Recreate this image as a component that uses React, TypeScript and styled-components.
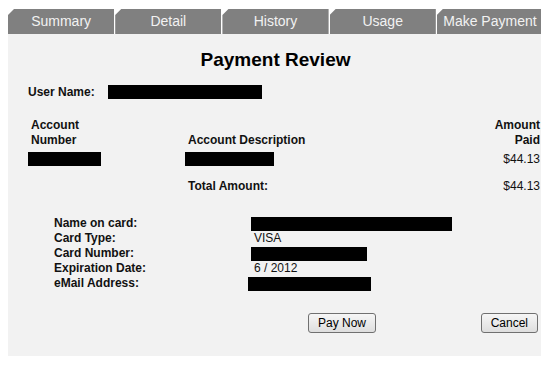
import styled, { createGlobalStyle } from "styled-components";

const GlobalStyle = createGlobalStyle`
  body {
    margin: 8px;
    background: #ffffff;
    font-family: "Liberation Sans", Arial, sans-serif;
    color: #000;
  }
`;

const tabs = ["Summary", "Detail", "History", "Usage", "Make Payment"];

const cardRows = [
  { label: "Name on card:", bar: 201 },
  { label: "Card Type:", text: "VISA" },
  { label: "Card Number:", bar: 116 },
  { label: "Expiration Date:", text: "6 / 2012" },
  { label: "eMail Address:", bar: 123, shift: -3 },
];

export default function App() {
  return (
    <>
      <GlobalStyle />
      <Page>
        <TabBar>
          {tabs.map((t) => (
            <Tab key={t}>{t}</Tab>
          ))}
        </TabBar>

        <Panel>
          <Title>Payment Review</Title>

          <UserRow>
            <Label>User Name:</Label>
            <Redacted $w={154} />
          </UserRow>

          <AccountTable>
            <HeadCell>
              Account
              <br />
              Number
            </HeadCell>
            <HeadCell>Account Description</HeadCell>
            <HeadCell $right>
              Amount
              <br />
              Paid
            </HeadCell>

            <DataCell>
              <Redacted $w={73} />
            </DataCell>
            <DataCell>
              <Redacted $w={89} />
            </DataCell>
            <DataCell $right>$44.13</DataCell>

            <TotalCell />
            <TotalCell>
              <Label>Total Amount:</Label>
            </TotalCell>
            <TotalCell $right>$44.13</TotalCell>
          </AccountTable>

          <CardTable>
            {cardRows.map((r) => (
              <CardRow key={r.label}>
                <Label>{r.label}</Label>
                {r.bar ? (
                  <Redacted $w={r.bar} $shift={r.shift} />
                ) : (
                  <Value>{r.text}</Value>
                )}
              </CardRow>
            ))}
          </CardTable>

          <ButtonRow>
            <Button>Pay Now</Button>
            <Button $push>Cancel</Button>
          </ButtonRow>
        </Panel>
      </Page>
    </>
  );
}

const Page = styled.div`
  width: 535px;
`;

const TabBar = styled.div`
  display: flex;
  gap: 1px;
  margin-top: 1px;
  height: 25px;
`;

const Tab = styled.div`
  flex: 1;
  background: #808080;
  color: #f2f2f2;
  font-size: 14px;
  line-height: 25px;
  text-align: center;
  clip-path: polygon(6px 0, 100% 0, 100% 100%, 0 100%, 0 6px);
`;

const Panel = styled.div`
  background: #f2f2f2;
  padding: 15px 3px 23px 20px;
`;

const Title = styled.h1`
  margin: 0;
  font-size: 19px;
  line-height: 22px;
  font-weight: bold;
  text-align: center;
  padding-right: 17px;
`;

const Label = styled.span`
  font-size: 12px;
  font-weight: bold;
  color: #111;
`;

const Value = styled.span`
  font-size: 12px;
  color: #111;
  padding-left: 3px;
`;

const Redacted = styled.span<{ $w: number; $shift?: number }>`
  display: inline-block;
  width: ${(p) => p.$w}px;
  height: 14px;
  background: #000;
  vertical-align: middle;
  margin-left: ${(p) => p.$shift ?? 0}px;
`;

const UserRow = styled.div`
  display: flex;
  align-items: center;
  height: 15px;
  margin-top: 13px;

  ${Label} {
    width: 80px;
  }
`;

const AccountTable = styled.div`
  display: grid;
  grid-template-columns: 157px 1fr auto;
  margin-top: 19px;
  font-size: 12px;
  line-height: 15px;
`;

const HeadCell = styled.div<{ $right?: boolean }>`
  align-self: end;
  font-weight: bold;
  color: #111;
  padding-left: 3px;
  text-align: ${(p) => (p.$right ? "right" : "left")};
`;

const DataCell = styled.div<{ $right?: boolean }>`
  display: flex;
  align-items: center;
  justify-content: ${(p) => (p.$right ? "flex-end" : "flex-start")};
  height: 16px;
  margin-top: 3px;
  color: #111;
`;

const TotalCell = styled.div<{ $right?: boolean }>`
  height: 15px;
  margin-top: 12px;
  padding-left: ${(p) => (p.$right ? 0 : 3)}px;
  text-align: ${(p) => (p.$right ? "right" : "left")};
  color: #111;
`;

const CardTable = styled.div`
  margin-top: 22px;
  padding-left: 26px;
`;

const CardRow = styled.div`
  display: grid;
  grid-template-columns: 197px auto;
  align-items: center;
  height: 15px;
  line-height: 15px;
`;

const ButtonRow = styled.div`
  display: flex;
  margin-top: 22px;
  padding-left: 280px;
  padding-right: 2px;
`;

const Button = styled.button<{ $push?: boolean }>`
  height: 20px;
  padding: 0 9px;
  font-family: "Liberation Sans", Arial, sans-serif;
  font-size: 12px;
  color: #000;
  background: linear-gradient(#f6f6f6, #dedede);
  border: 1px solid #707070;
  border-radius: 3px;
  margin-left: ${(p) => (p.$push ? "auto" : "0")};
`;
